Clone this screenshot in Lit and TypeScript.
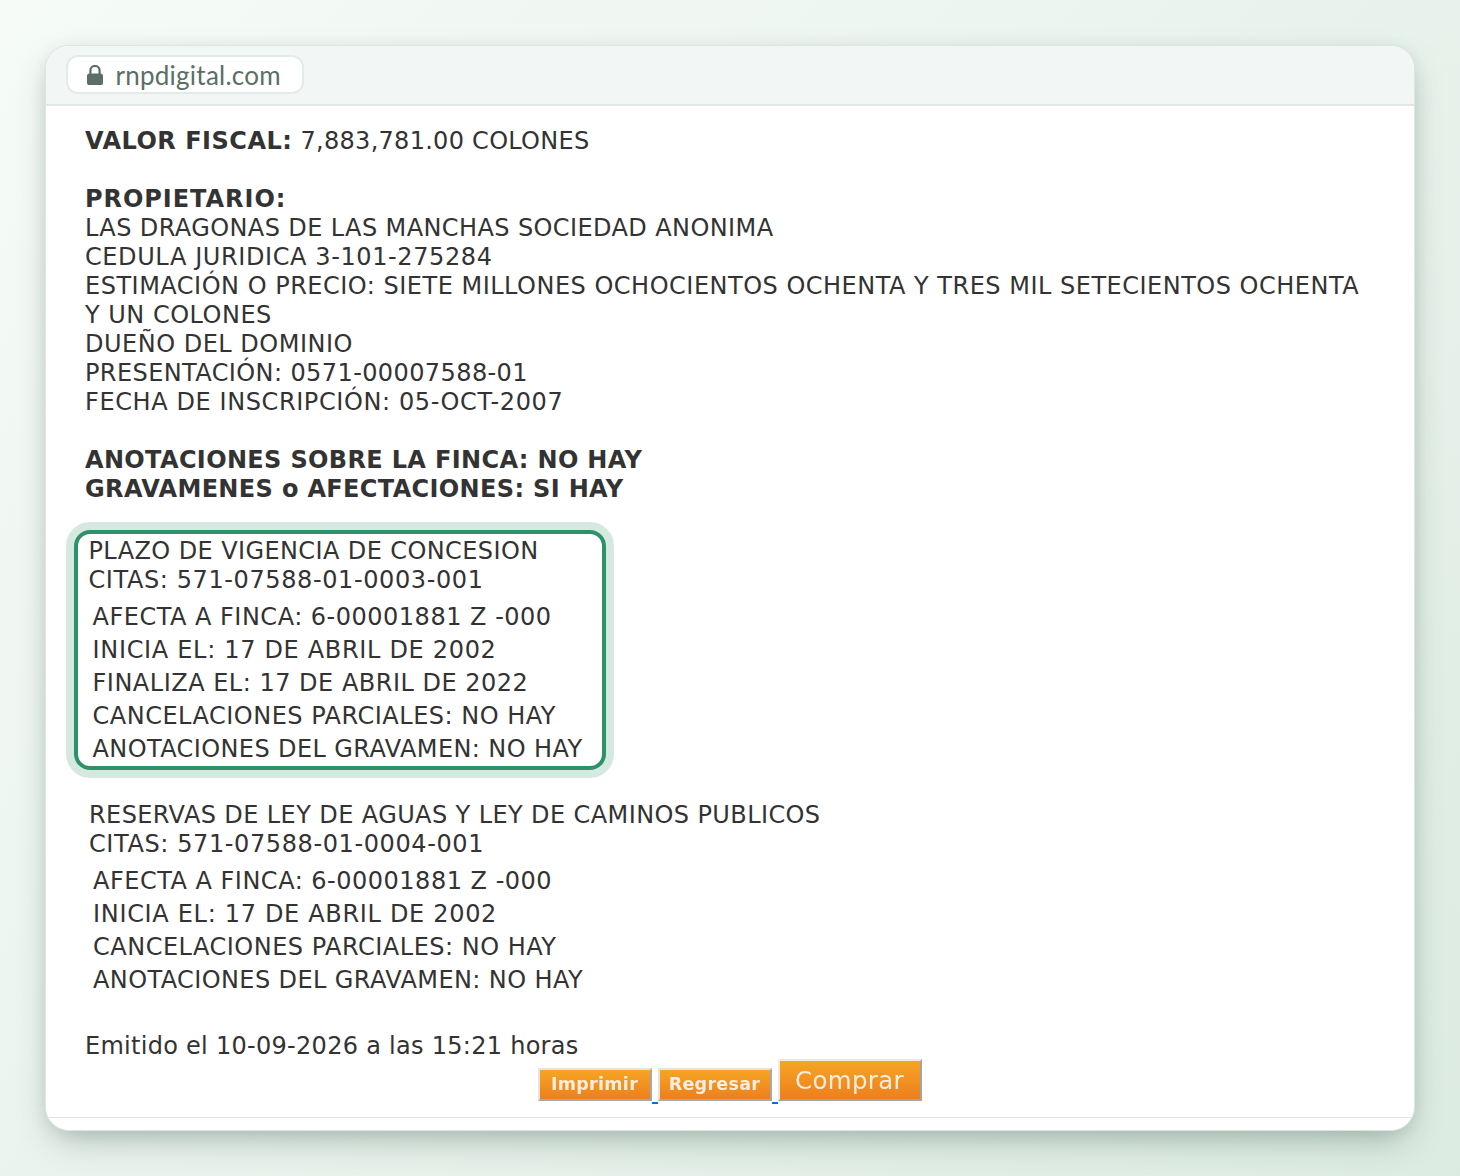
import { LitElement, html, css } from "lit";
import { customElement } from "lit/decorators.js";

@customElement("app-root")
export class AppRoot extends LitElement {
  static styles = css`
    :host { display: block; width: 1460px; height: 1176px; box-sizing: border-box; padding: 45px 45px 0; background: linear-gradient(135deg, #f6fbf8 0%, #dcebe2 100%); font-family: "DejaVu Sans", Verdana, sans-serif; overflow: hidden; }
    .window { height: 1086px; box-sizing: border-box; background: #fff; border-radius: 24px; border: 1.5px solid #dde7e2; box-shadow: 0 14px 34px -8px rgba(50,80,65,.38), 0 2px 14px rgba(60,90,75,.08); overflow: hidden; display: flex; flex-direction: column; }
    .bar { height: 59.500px; flex: none; box-sizing: border-box; background: #f2f7f5; border-bottom: 2px solid #e0e8e4; padding: 9px 0 0 20px; }
    .pill { display: inline-flex; align-items: center; gap: 13px; box-sizing: border-box; width: 238px; height: 39px; padding-left: 18.500px; background: #fff; border: 2px solid #e2ebe7; border-radius: 12px; font: 400 26px/1 Lato, sans-serif; letter-spacing: .25px; color: #5b6f66; }
    .pill svg { width: 16px; height: 20px; flex: none; }
    .body { flex: 1; padding: 21.500px 0 0 39px; color: #333; font-size: 24px; letter-spacing: .5px; line-height: 29px; position: relative; }
    .blk { margin: 0 0 29px; width: 1290px; }
    b { font-weight: 700; letter-spacing: .35px; }
    b.wide { letter-spacing: .95px; }
    b.mid { letter-spacing: .5px; }
    .s3 { letter-spacing: .28px; } .s4 { letter-spacing: .4px; } .s6 { letter-spacing: .6px; } .s7 { letter-spacing: .68px; }
    .group { width: fit-content; box-sizing: border-box; }
    .hl { border: 4.500px solid #2e9169; border-radius: 16px; box-shadow: 0 0 0 8px #d6e9e0; margin: 26px 0 0 -11.500px; padding: 3px 12px 0 11px; width: 532px; height: 240px; }
    .plain { margin: 29px 0 0 -11px; padding: 2px 12px 0 15px; }
    .row { margin-left: 4px; height: 33px; line-height: 33px; white-space: nowrap; }
    .rows { margin-top: 6px; }
    .foot { margin-top: 35px; height: 27px; }
    .btns { display: flex; align-items: flex-end; margin: 0 0 0 452.500px; letter-spacing: 0; }
    .btn { box-sizing: border-box; height: 33px; background: linear-gradient(#f5a524, #ee7f1c); color: #fbeee0; font-weight: 700; font-size: 17.500px; letter-spacing: .3px; display: flex; align-items: center; justify-content: center; border: 2px solid; border-color: #e6e2dc #a9a9a9 #a9a9a9 #e6e2dc; }
    .btn span { filter: blur(.5px); }
    .imp { width: 114px; } .reg { width: 114px; }
    .com { width: 144px; height: 42px; font-weight: 400; font-size: 24.500px; border-color: #eeeae4 #a4a4a4 #a4a4a4 #eeeae4; }
    .gap { width: 6px; height: 2px; background: #0a70c8; margin-bottom: -3px; align-self: flex-end; }
    .rule { position: absolute; left: 0; right: 0; bottom: 12.500px; height: 1px; background: #e4e4e4; }
  `;
  render() {
    return html`<div class="window">
      <div class="bar"><div class="pill"><svg viewBox="0 0 16 20"><path fill="none" stroke="#5b6f66" stroke-width="2.200" d="M3.400 10V5.600a4.600 4.600 0 0 1 9.200 0V10"/><rect y="8.500" width="16" height="11.500" rx="2.600" fill="#5b6f66"/></svg>rnpdigital.com</div></div>
      <div class="body">
        <div class="blk"><b class="mid">VALOR FISCAL:</b> <span class="s3">7,883,781.00 COLONES</span></div>
        <div class="blk"><b class="wide">PROPIETARIO:</b><br><span class="s4">LAS DRAGONAS DE LAS MANCHAS SOCIEDAD ANONIMA</span><br><span class="s6">CEDULA JURIDICA 3-101-275284</span><br>ESTIMACIÓN O PRECIO: SIETE MILLONES OCHOCIENTOS OCHENTA Y TRES MIL SETECIENTOS OCHENTA Y UN COLONES<br>DUEÑO DEL DOMINIO<br><span class="s4">PRESENTACIÓN: 0571-00007588-01</span><br><span class="s6">FECHA DE INSCRIPCIÓN: 05-OCT-2007</span></div>
        <div><b>ANOTACIONES SOBRE LA FINCA: NO HAY<br>GRAVAMENES o AFECTACIONES: SI HAY</b></div>
        <div class="group hl"><span class="s4">PLAZO DE VIGENCIA DE CONCESION</span><br><span class="s6">CITAS: 571-07588-01-0003-001</span>
          <div class="rows"><div class="row">AFECTA A FINCA: 6-00001881 Z -000</div><div class="row s7">INICIA EL: 17 DE ABRIL DE 2002</div><div class="row">FINALIZA EL: 17 DE ABRIL DE 2022</div><div class="row">CANCELACIONES PARCIALES: NO HAY</div><div class="row s4">ANOTACIONES DEL GRAVAMEN: NO HAY</div></div>
        </div>
        <div class="group plain"><span class="s4">RESERVAS DE LEY DE AGUAS Y LEY DE CAMINOS PUBLICOS</span><br><span class="s6">CITAS: 571-07588-01-0004-001</span>
          <div class="rows"><div class="row">AFECTA A FINCA: 6-00001881 Z -000</div><div class="row s7">INICIA EL: 17 DE ABRIL DE 2002</div><div class="row">CANCELACIONES PARCIALES: NO HAY</div><div class="row s4">ANOTACIONES DEL GRAVAMEN: NO HAY</div></div>
        </div>
        <div class="foot s3">Emitido el 10-09-2026 a las 15:21 horas</div>
        <div class="btns"><div class="btn imp"><span>Imprimir</span></div><span class="gap"></span><div class="btn reg"><span>Regresar</span></div><span class="gap"></span><div class="btn com"><span>Comprar</span></div></div>
        <div class="rule"></div>
      </div>
    </div>`;
  }
}
